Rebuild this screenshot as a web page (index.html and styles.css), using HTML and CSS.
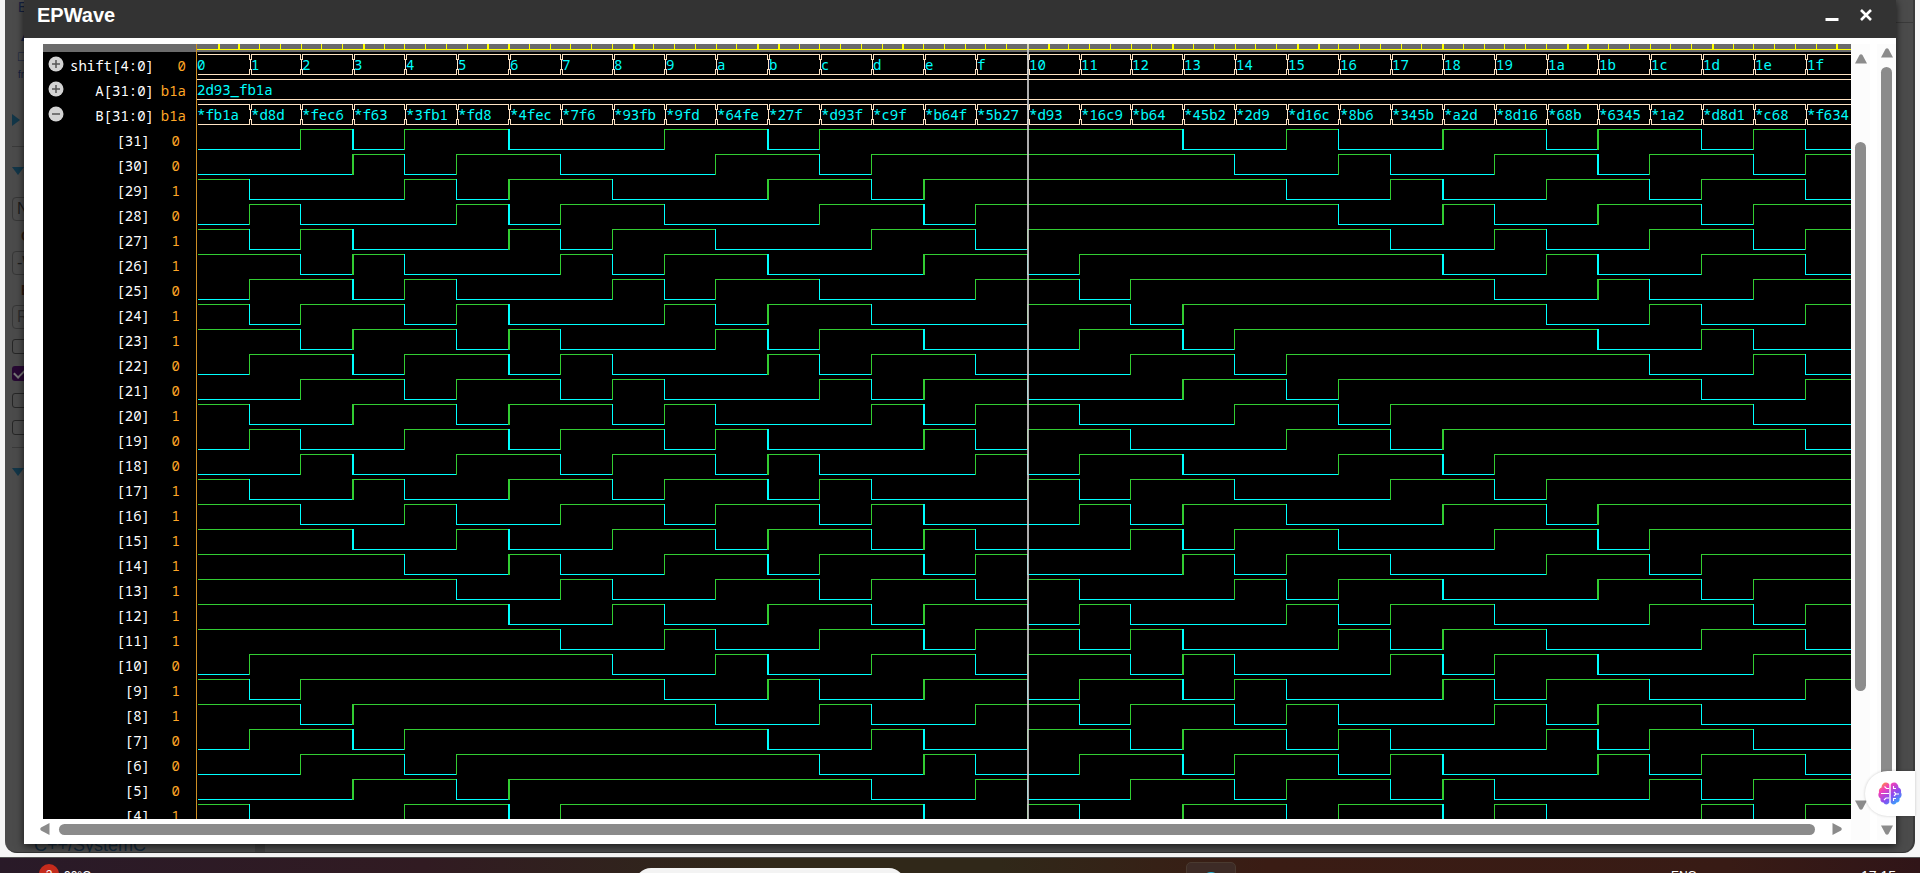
FILE: index.html
```html
<!DOCTYPE html>
<html lang="en">
<head>
<meta charset="utf-8">
<title>EPWave</title>
<link rel="stylesheet" href="styles.css">
</head>
<body>
<div class="desktop">
  <main class="page">
    <aside class="sidebar">
      <span class="side-letter">E</span>
      <span class="side-letter side-up">▲</span>
      <span class="side-letter side-box">□</span>
      <span class="side-letter side-small">fr</span>
      <span class="tri tri-right"></span>
      <hr class="side-line">
      <span class="tri tri-down"></span>
      <input class="side-input" aria-label="Libraries" value="N">
      <span class="side-label">O</span>
      <input class="side-input" aria-label="Compile options" value="-W">
      <span class="side-label">E</span>
      <input class="side-input side-hint" aria-label="Run options" value="R">
      <input class="side-check" type="checkbox" aria-label="Use run script">
      <input class="side-check" type="checkbox" aria-label="Open EPWave after run" checked>
      <input class="side-check" type="checkbox" aria-label="Show output file">
      <input class="side-check" type="checkbox" aria-label="Download files">
      <hr class="side-line">
      <span class="tri tri-down"></span>
      <a class="side-link" href="#">C++/SystemC</a>
    </aside>
    <div class="editor"></div>
  </main>

  <section class="dialog" role="dialog" aria-labelledby="dialog-title">
    <header class="dialog-bar">
      <h1 class="dialog-title" id="dialog-title">EPWave</h1>
      <button class="bar-button" aria-label="Minimize"><svg width="14" height="14" viewBox="0 0 14 14"><path d="M0.5 11.5h13" stroke="#fff" stroke-width="3"/></svg></button>
      <button class="bar-button" aria-label="Close"><svg width="14" height="14" viewBox="0 0 14 14"><path d="M2 2l10 10M12 2L2 12" stroke="#fff" stroke-width="2.6"/></svg></button>
    </header>
    <div class="dialog-body">
      <div class="viewer">
        <div class="scope">
          <div class="signals">
            <div class="ruler-pad"></div>
            <div id="signals"></div>
          </div>
          <div class="waves">
            <svg id="waves" class="wave-canvas" height="775"></svg>
            <div class="cursor"></div>
          </div>
        </div>
        <div class="hscroll">
          <button class="arrow" aria-label="Scroll left"><svg width="10" height="12" viewBox="0 0 10 12"><path d="M9.500 0v12L1 7.500Q-0.500 6 1 4.500Z"/></svg></button>
          <div class="hthumb"></div>
          <button class="arrow" aria-label="Scroll right"><svg width="10" height="12" viewBox="0 0 10 12"><path d="M0.500 0v12L9 7.500Q10.500 6 9 4.500Z"/></svg></button>
        </div>
      </div>
      <div class="vscroll inner">
        <button class="arrow" aria-label="Scroll up"><svg width="12" height="10" viewBox="0 0 12 10"><path d="M0 9.500h12L7.500 1Q6 -0.500 4.500 1Z"/></svg></button>
        <div class="vtrack"><div class="vthumb part"></div></div>
        <button class="arrow" aria-label="Scroll down"><svg width="12" height="10" viewBox="0 0 12 10"><path d="M0 0.500h12L7.500 9Q6 10.500 4.500 9Z"/></svg></button>
      </div>
      <div class="vscroll outer">
        <button class="arrow" aria-label="Scroll up"><svg width="12" height="10" viewBox="0 0 12 10"><path d="M0 9.500h12L7.500 1Q6 -0.500 4.500 1Z"/></svg></button>
        <div class="vtrack"><div class="vthumb"></div></div>
        <button class="arrow" aria-label="Scroll down"><svg width="12" height="10" viewBox="0 0 12 10"><path d="M0 0.500h12L7.500 9Q6 10.500 4.500 9Z"/></svg></button>
      </div>
    </div>
  </section>

  <button class="brain" aria-label="Assistant">
    <svg width="24" height="23" viewBox="0 0 24 23">
      <defs>
        <linearGradient id="brain-fill" x1="0.100" y1="0" x2="0.900" y2="1">
          <stop offset="0" stop-color="#ffa02a"/><stop offset="0.250" stop-color="#f43fb8"/><stop offset="0.600" stop-color="#8a4cf0"/><stop offset="1" stop-color="#22b8ff"/>
        </linearGradient>
      </defs>
      <g fill="url(#brain-fill)">
        <path d="M11.300 2.500v18C10 23 6.500 23 5.500 20.500C3 20.500 2 18.500 2.500 16.500C0 15 0 12 1 10.500C0.500 8 1.500 6 3.500 5.500C3.500 2.500 5.500 0.500 8 0.500C9.500 0.500 10.800 1.300 11.300 2.500ZM12.700 2.500v18C14 23 17.500 23 18.500 20.500C21 20.500 22 18.500 21.500 16.500C24 15 24 12 23 10.500C23.500 8 22.500 6 20.500 5.500C20.500 2.500 18.500 0.500 16 0.500C14.500 0.500 13.200 1.300 12.700 2.500Z"/>
      </g>
      <path fill="none" stroke="#fff" stroke-width="1.100" d="M11 6.500H8.500L6.500 4.500M3 11.500H11M6 18l2-2h3M15.500 4v2.500h2.500M16 10l2 2h3M18 12l-2 2M15.500 19v-2.500h2.500"/>
    </svg>
  </button>
</div>

<footer class="taskbar">
  <span class="weather"><span class="badge">2</span>90°C</span>
  <div class="search"></div>
  <div class="app"><span class="app-dot"></span></div>
  <span class="lang">ENG</span>
  <span class="clock">17:15</span>
</footer>
<script src="waves.js"></script>
</body>
</html>
```

FILE: styles.css
```css
* {
  box-sizing: border-box;
}

body {
  margin: 0;
  height: 100vh;
  display: flex;
  flex-direction: column;
  overflow: hidden;
  background: #f6f6f6;
  font-family: "Liberation Sans", Arial, sans-serif;
}

button {
  border: 0;
  padding: 0;
  background: none;
  display: flex;
  align-items: center;
  justify-content: center;
}

.desktop {
  position: relative;
  flex: 1;
  min-height: 0;
  padding: 0 5px 4px;
  display: flex;
}

/* dimmed page behind the dialog */
.page {
  flex: 1;
  display: flex;
  background: #4b4b4b;
  border-bottom: 1px solid #333;
  border-right: 2px solid #3a3a3a;
  border-radius: 0 0 12px 12px;
  overflow: hidden;
}

.sidebar {
  width: 260px;
  padding-left: 7px;
  display: flex;
  flex-direction: column;
  align-items: flex-start;
  border-right: 10px solid #404040;
}

.editor {
  flex: 1;
  margin-top: 22px;
  border-top: 1px solid #3a3a3a;
}

.side-letter {
  height: 16px;
  margin: 0 0 13px 6px;
  font-size: 14px;
  line-height: 14px;
  color: #14203f;
}

.side-up {
  margin-bottom: 4px;
}

.side-box {
  margin-bottom: 3px;
}

.side-small {
  font-size: 10px;
  margin-bottom: 30px;
}

.tri {
  width: 12px;
  height: 12px;
  background: #123648;
  flex: none;
}

.tri-right {
  width: 8px;
  clip-path: polygon(0 0, 100% 50%, 0 100%);
  margin-bottom: 20px;
}

.tri-down {
  height: 8px;
  clip-path: polygon(0 0, 100% 0, 50% 100%);
  margin-bottom: 22px;
}

.side-line {
  width: 100%;
  margin: 0 0 20px;
  border: 0;
  border-top: 1px solid #3a3a3a;
}

.side-input {
  width: 200px;
  height: 24px;
  flex: none;
  padding: 0 4px;
  border: 1px solid #373737;
  border-radius: 4px;
  background: #4b4b4b;
  color: #1c1c1c;
  font-size: 16px;
}

.side-hint {
  color: #2d2d2d;
  margin-bottom: 10px;
}

.side-label {
  margin-left: 9px;
  height: 30px;
  line-height: 30px;
  font-size: 14px;
  font-weight: bold;
  color: #2b1a10;
}

.side-check {
  appearance: none;
  display: flex;
  align-items: center;
  justify-content: center;
  width: 15px;
  height: 15px;
  flex: none;
  margin: 0 0 12px;
  border: 1px solid #262626;
  border-radius: 3px;
}

.side-check:checked {
  border: 0;
  background: #270833;
}

.side-check:checked::after {
  content: "";
  width: 5px;
  height: 9px;
  margin-bottom: 3px;
  border: solid #777;
  border-width: 0 2px 2px 0;
  transform: rotate(45deg);
}

.side-link {
  margin: auto 0 -3px 22px;
  font-size: 18px;
  line-height: 20px;
  color: #16293a;
  text-decoration: none;
}

/* dialog */
.dialog {
  position: absolute;
  top: 0;
  left: 24px;
  right: 24px;
  bottom: 13px;
  display: flex;
  flex-direction: column;
  background: #fff;
  box-shadow: 0 2px 8px rgba(0, 0, 0, 0.7);
}

.dialog-bar {
  height: 38px;
  flex: none;
  padding: 0 23px 8px 13px;
  display: flex;
  align-items: center;
  gap: 20px;
  background: #333;
}

.dialog-title {
  flex: 1;
  margin: 0;
  font-size: 20px;
  line-height: 24px;
  color: #fff;
}

.bar-button {
  width: 14px;
  height: 14px;
}

.dialog-body {
  flex: 1;
  min-height: 0;
  padding: 6px 0 4px 19px;
  display: flex;
}

.viewer {
  flex: 1;
  min-width: 0;
  display: flex;
  flex-direction: column;
}

.scope {
  flex: 1;
  min-height: 0;
  display: flex;
  overflow: hidden;
  background: #000;
  font-family: "Noto Sans Mono", "Noto Mono", "DejaVu Sans Mono", monospace;
  font-size: 14px;
}

.signals {
  width: 154px;
  flex: none;
  border-right: 1px solid #ce8f24;
}

.ruler-pad {
  height: 8px;
  background: #6b6b6b;
}

.row {
  height: 25px;
  padding: 2px 10px 0 5px;
  display: flex;
  align-items: center;
  line-height: 23px;
  color: #fff;
}

.row-name {
  flex: 1;
  text-align: right;
}

.row-value {
  width: 32px;
  text-align: right;
  color: #ffa726;
}

.row-bit {
  padding-right: 16px;
}

.row-bit .row-value {
  width: 30px;
}

.toggle {
  width: 16px;
  height: 16px;
  margin-bottom: 3px;
}

.waves {
  position: relative;
  flex: 1;
  min-width: 0;
  overflow: hidden;
}

.wave-canvas {
  display: block;
  width: 100%;
}

.cursor {
  position: absolute;
  top: 0;
  bottom: 0;
  left: 830px;
  width: 2px;
  background: rgba(204, 204, 204, 0.85);
}

/* scroll bars */
.arrow {
  fill: #8b8b8b;
  flex: none;
}

.hscroll {
  height: 21px;
  flex: none;
  padding: 0 9px 1px 0;
  margin-left: -3px;
  display: flex;
  align-items: center;
  gap: 9px;
}

.hthumb {
  flex: 1;
  height: 11px;
  margin-right: 8px;
  border-radius: 6px;
  background: #8b8b8b;
}

.vscroll {
  width: 19px;
  flex: none;
  display: flex;
  flex-direction: column;
  align-items: center;
  background: #fcfcfc;
}

.inner {
  padding: 10px 0 30px;
  margin-right: 7px;
}

.outer {
  padding: 4px 0 5px;
}

.vtrack {
  flex: 1;
  padding: 9px 0 11px;
}

.vthumb {
  width: 11px;
  height: 100%;
  border-radius: 6px;
  background: #8b8b8b;
}

.part {
  height: 76.7%;
  margin-top: 69px;
}

.brain {
  position: absolute;
  right: 5px;
  bottom: 41px;
  width: 50px;
  height: 45px;
  border-radius: 23px 0 0 23px;
  background: #fff;
  box-shadow: 0 0 3px rgba(0, 0, 0, 0.2);
}

/* taskbar */
.taskbar {
  height: 16px;
  flex: none;
  padding: 0 24px 0 39px;
  display: flex;
  align-items: flex-start;
  overflow: hidden;
  border-top: 1px solid #555;
  background: linear-gradient(90deg, #291a28 0%, #311b22 22%, #302819 40%, #302819 52%, #3a1c14 66%, #381b15 90%, #301518 100%);
  color: #fff;
  font-size: 12px;
  line-height: 14px;
}

.weather {
  flex: 595 1 0;
  display: flex;
  align-items: flex-start;
  gap: 5px;
  padding-top: 11px;
}

.badge {
  width: 20px;
  height: 20px;
  margin-top: -5px;
  border-radius: 50%;
  background: #c42b1c;
  text-align: center;
  line-height: 22px;
}

.search {
  width: 270px;
  height: 32px;
  margin-top: 10px;
  border-radius: 16px;
  background: #f3f3f3;
}

.app {
  width: 50px;
  height: 40px;
  margin: 4px 0 0 281px;
  padding-top: 9px;
  border-radius: 5px;
  border: 1px solid #4a3a30;
  background: #3d2b26;
}

.app-dot {
  display: block;
  width: 18px;
  height: 18px;
  margin: 0 auto;
  border-radius: 50%;
  background: #29b6d8;
}

.lang {
  flex: 461 1 0;
  padding: 11px 0 0;
  text-align: right;
}

.clock {
  padding: 11px 0 0 164px;
  font-size: 14px;
}
```

FILE: waves.js
```js
// Rotate-right demo: B is A rotated right by shift.
const A = 0x2d93fb1a;
const STEPS = 32;
const PITCH = 51.88;
const ROW = 25;
const TOP = 10;
const HIGH = "#32cd32";
const LOW = "#00ffff";
const BUS = "#ffe4c4";
// steps whose edge covers two pixel columns
const WIDE = new Set([3, 6, 11, 14, 19, 24, 27]);

const edge = (k) => Math.floor(0.14 + PITCH * k);
const rotate = (s) => (s === 0 ? A : ((A >>> s) | (A << (32 - s))) >>> 0);

const parts = [];
const line = (d, color) =>
  parts.push(`<path d="${d}" stroke="${color}" fill="none" shape-rendering="crispEdges"/>`);
const label = (x, y, text) =>
  parts.push(`<text x="${x}" y="${y}" fill="${LOW}">${text}</text>`);

// time ruler
parts.push('<rect width="100%" height="8" fill="#6b6b6b"/>');
parts.push('<rect y="5" width="100%" height="1" fill="#ffff00"/>');
for (let i = 1; i < 80; i++) {
  const x = Math.floor(0.4 + (PITCH * 2 / 5) * i);
  const w = [1, 2, 8].includes(i % 13) ? 2 : 1;
  parts.push(`<rect x="${x}" width="${w}" height="5" fill="#ffff00"/>`);
}

// one framed bus cell per step, pinched at both edges
function busRow(y, textOf) {
  for (let k = 0; k < STEPS; k++) {
    const l = edge(k) + (k ? 2 : 1);
    const r = edge(k + 1);
    line(`M${l} ${y + 0.5}H${r + 1}M${l} ${y + 20.5}H${r + 1}`, BUS);
    if (k) {
      line(`M${l + 0.5} ${y}V${y + 6}M${l - 0.5} ${y + 5}V${y + 16}M${l + 0.5} ${y + 15}V${y + 21}`, BUS);
    }
    line(`M${r + 0.5} ${y}V${y + 6}M${r + 1.5} ${y + 5}V${y + 16}M${r + 0.5} ${y + 15}V${y + 21}`, BUS);
    label(k ? l : 0, y + 16, textOf(k));
  }
}

busRow(TOP, (k) => k.toString(16));

line(`M0 ${TOP + ROW + 0.5}H4000M0 ${TOP + ROW + 20.5}H4000`, BUS);
label(0, TOP + ROW + 16, "2d93_fb1a");

busRow(TOP + 2 * ROW, (k) => {
  const four = k < 15 ? k % 2 === 0 : k % 2 === 1;
  return "*" + rotate(k).toString(16).padStart(8, "0").slice(four ? -4 : -3);
});

for (let bit = 31; bit >= 4; bit--) {
  const y = TOP + ROW * (34 - bit);
  let prev = null;
  for (let k = 0; k < STEPS; k++) {
    const v = (rotate(k) >>> bit) & 1;
    const color = v ? HIGH : LOW;
    const x = edge(k);
    if (prev !== null && prev !== v) {
      line(`M${x + 0.5} ${y}V${y + 21}${WIDE.has(k) ? `M${x + 1.5} ${y}V${y + 21}` : ""}`, color);
    }
    line(`M${x + 1} ${v ? y + 0.5 : y + 20.5}H${edge(k + 1) + 1}`, color);
    prev = v;
  }
}
document.getElementById("waves").innerHTML = parts.join("");

// signal names and values
const toggle = (open) =>
  `<button class="toggle" aria-label="${open ? "Collapse" : "Expand"}"><svg width="16" height="16" viewBox="0 0 16 16"><circle cx="8" cy="8" r="7.500" fill="#d3d3d3"/><path d="M4 8h8${open ? "" : "M8 4v8"}" stroke="#555" stroke-width="1.500"/></svg></button>`;
const row = (icon, name, value, cls) =>
  `<div class="row ${cls}">${icon}<span class="row-name">${name}</span><span class="row-value">${value}</span></div>`;

let html = row(toggle(false), "shift[4:0]", "0", "");
html += row(toggle(false), "A[31:0]", "b1a", "");
html += row(toggle(true), "B[31:0]", "b1a", "");
for (let bit = 31; bit >= 4; bit--) {
  html += row("", `[${bit}]`, (A >>> bit) & 1, "row-bit");
}
document.getElementById("signals").innerHTML = html;
```
